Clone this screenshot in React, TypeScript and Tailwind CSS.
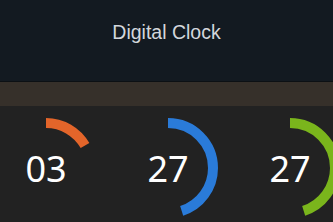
const R = 45;
const C = 2 * Math.PI * R;

function Ring({ value, degrees, color }: { value: string; degrees: number; color: string }) {
	const len = (C * degrees) / 360;
	return (
		<div className="relative flex h-[100px] w-[100px] flex-none items-center justify-center">
			<svg
				className="absolute inset-0 -rotate-90"
				width="100"
				height="100"
				viewBox="0 0 100 100"
			>
				<circle
					cx="50"
					cy="50"
					r={R}
					fill="none"
					stroke={color}
					strokeWidth="10"
					strokeDasharray={`${len} ${C}`}
				/>
			</svg>
			<span className="relative mt-[2px] text-[36px] leading-none text-white [font-family:'Noto_Sans',sans-serif]">
				{value}
			</span>
		</div>
	);
}

export default function App() {
	return (
		<div className="h-[222px] w-[333px] overflow-hidden bg-[#222222]">
			<header className="flex h-[82px] items-start justify-center border-b border-[#0c1014] bg-[#131a21] pt-[18px]">
				<h1 className="text-[19.5px] text-[#d3d7dc] [font-family:'Liberation_Sans',sans-serif]">
					Digital Clock
				</h1>
			</header>
			<div className="h-[24px] bg-[#36302a]" />
			<div className="ml-[-4px] flex gap-[22px] pt-[12px]">
				<Ring value="03" degrees={60} color="#e3652a" />
				<Ring value="27" degrees={162} color="#2a7bd9" />
				<Ring value="27" degrees={162} color="#7ab51c" />
			</div>
		</div>
	);
}
